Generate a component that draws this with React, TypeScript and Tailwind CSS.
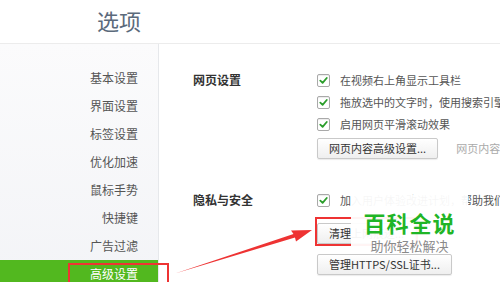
import React from 'react';

const navItems = ['基本设置', '界面设置', '标签设置', '优化加速', '鼠标手势', '快捷键', '广告过滤', '高级设置'];

const Checkbox: React.FC = () => (
  <span className="w-[13px] h-[13px] shrink-0 rounded-[2px] border border-[#a9a9a9] bg-white flex items-center justify-center shadow-[inset_0_1px_1px_rgba(0,0,0,0.08)]">
    <svg width="9" height="9" viewBox="0 0 10 10">
      <path d="M1.5 5.2 L4 7.6 L8.6 2.2" fill="none" stroke="#2a9d2a" strokeWidth="2" strokeLinecap="round" strokeLinejoin="round" />
    </svg>
  </span>
);

const CheckRow: React.FC<{ label: string }> = ({ label }) => (
  <div className="h-[22px] flex items-center gap-[10px] whitespace-nowrap">
    <Checkbox />
    <span className="text-[11px] text-[#555]">{label}</span>
  </div>
);

const Button: React.FC<{ label: string; className?: string }> = ({ label, className = '' }) => (
  <button
    className={`h-[21px] px-[11px] rounded-[2px] border border-[#c9c9c9] bg-gradient-to-b from-white to-[#efefef] text-[11px] text-[#333] whitespace-nowrap shadow-[0_1px_1px_rgba(0,0,0,0.08)] ${className}`}
  >
    {label}
  </button>
);

export default function App() {
  return (
    <div
      className="relative w-[500px] h-[282px] overflow-hidden bg-white flex flex-col"
      style={{ fontFamily: '"Noto Sans CJK SC", "Liberation Sans", sans-serif' }}
    >
      {/* header */}
      <div className="h-[44px] shrink-0 border-b border-[#ececec] flex items-center pl-[97px]">
        <span className="text-[22px] text-[#5b6a7b] leading-none -mt-[4px]">选项</span>
      </div>

      <div className="flex flex-1 min-h-0">
        {/* sidebar */}
        <div className="w-[159px] shrink-0 border-r border-[#e6e8eb] bg-gradient-to-b from-[#fbfbfc] to-[#f3f4f7] pt-[20px]">
          {navItems.map((item, i) => {
            const active = i === navItems.length - 1;
            return (
              <div
                key={item}
                className={`h-[28px] flex items-center justify-end pr-[20px] text-[12px] ${
                  active ? 'bg-[#52b81f] text-white' : 'text-[#555]'
                }`}
              >
                {item}
              </div>
            );
          })}
        </div>

        {/* content */}
        <div className="flex-1 pl-[34px] pt-[25px]">
          <div className="flex">
            <div className="w-[124px] shrink-0 h-[22px] flex items-center text-[12px] font-bold text-[#333]">网页设置</div>
            <div className="flex flex-col">
              <CheckRow label="在视频右上角显示工具栏" />
              <CheckRow label="拖放选中的文字时，使用搜索引擎搜索" />
              <CheckRow label="启用网页平滑滚动效果" />
              <div className="mt-[3px] flex items-center">
                <Button label="网页内容高级设置..." />
                <span className="ml-[18px] text-[11px] text-[#aaa] whitespace-nowrap">网页内容高级设置</span>
              </div>
            </div>
          </div>

          <div className="flex mt-[30px]">
            <div className="w-[124px] shrink-0 h-[22px] flex items-center text-[12px] font-bold text-[#333]">隐私与安全</div>
            <div className="flex flex-col">
              <CheckRow label="加入用户体验改进计划，帮助我们改进产品" />
              <div className="mt-[8px] flex">
                <div className="outline outline-2 outline-[#ee3333]">
                  <Button label="清理上网痕迹..." />
                </div>
              </div>
              <div className="mt-[10px] flex">
                <Button label="管理HTTPS/SSL证书..." />
              </div>
              <div className="mt-[10px] flex">
                <Button label="管理加载项设置..." />
              </div>
            </div>
          </div>
        </div>
      </div>

      {/* annotation: red box on active nav */}
      <div className="absolute left-[68px] top-[263px] w-[101px] h-[26px] border-2 border-[#ee3333]" />

      {/* annotation: arrow */}
      <svg className="absolute left-0 top-0 pointer-events-none" width="500" height="282">
        <polygon points="175,273.5 295,237.5 296,241.5 312,230 291,230.5 293.5,234" fill="#ee3333" />
      </svg>

      {/* watermark */}
      <div className="absolute left-[351px] top-[195px] w-[117px] h-[54px] bg-white/95 flex flex-col items-center pt-[16px]">
        <span className="text-[22px] leading-none font-bold text-[#1fb526] tracking-[1px]">百科全说</span>
        <span className="mt-[6px] text-[13px] leading-none text-[#8a8a8a]">助你轻松解决</span>
      </div>
    </div>
  );
}
